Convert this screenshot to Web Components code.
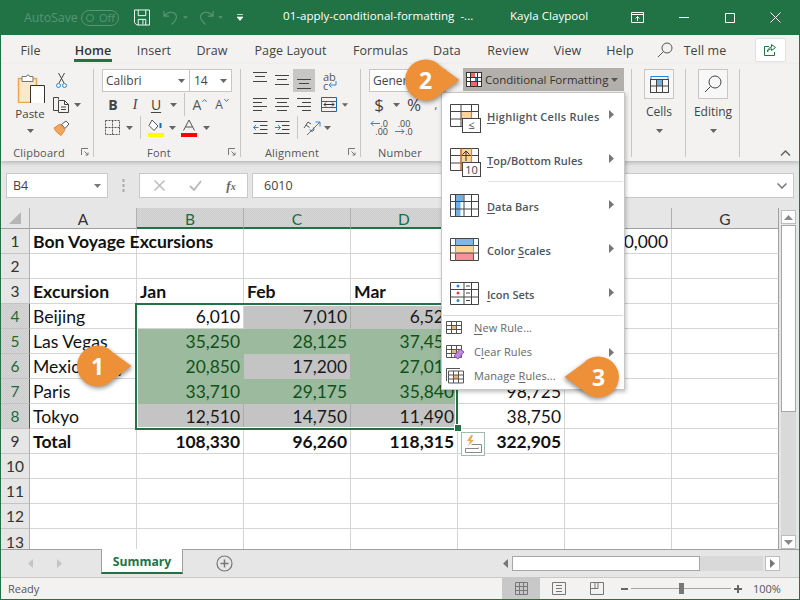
<!DOCTYPE html>
<html><head><meta charset="utf-8"><title>Excel</title>
<style>
html,body{margin:0;padding:0;background:#fff}
body{width:800px;height:600px;overflow:hidden}
</style></head><body>
<x-excel>
  <x-titlebar></x-titlebar>
  <x-tabbar></x-tabbar>
  <x-ribbon></x-ribbon>
  <x-formulabar></x-formulabar>
  <x-sheet></x-sheet>
  <x-sheettabs></x-sheettabs>
  <x-statusbar></x-statusbar>
  <x-cfmenu></x-cfmenu>
  <x-callout style="left:76px;top:345px">1</x-callout>
  <x-callout style="left:404px;top:59px">2</x-callout>
  <x-callout flip style="left:563px;top:356px">3</x-callout>
</x-excel>
<script>
const UI='"Open Sans","Noto Sans","Liberation Sans",sans-serif';
const CAL='Lato,"Open Sans",sans-serif';
function def(name,html){customElements.define(name,class extends HTMLElement{constructor(){super();this.attachShadow({mode:'open'}).innerHTML=html;}});}
const caret=(c='#666')=>`<svg width="7" height="4" viewBox="0 0 7 4" style="display:block"><path d="M0 0h7L3.5 4z" fill="${c}"/></svg>`;
const tri=(c='#777')=>`<svg width="5" height="9" viewBox="0 0 5 9" style="display:block"><path d="M0 0l5 4.5L0 9z" fill="${c}"/></svg>`;
const launcher=`<svg width="8" height="8" viewBox="0 0 8 8" style="display:block"><path d="M.5 7V.5H7M3.5 3.5L7 7M7 4.5V7H4.5" fill="none" stroke="#777"/></svg>`;
const hl=(rows,col='#444')=>`<svg width="16" height="23" viewBox="0 0 16 23" style="display:block">${rows.map(r=>`<path d="M${r[0]} ${r[2]}.5H${r[1]}" stroke="${col}"/>`).join('')}</svg>`;

def('x-excel',`<style>
:host{display:flex;flex-direction:column;position:relative;box-sizing:border-box;width:800px;height:600px;border:1px solid #217346;border-top:0;background:#e6e6e6;overflow:hidden;font-family:${UI}}
::slotted(x-callout){position:absolute;z-index:6}
::slotted(x-cfmenu){position:absolute;left:440px;top:92px;z-index:5}
</style><slot></slot>`);

def('x-titlebar',`<style>
:host{display:flex;align-items:center;height:35px;flex:none;background:#217346;color:#fff;font:11.6px ${UI};padding-left:23px;box-sizing:border-box;white-space:nowrap;margin-left:-1px;margin-right:-1px}
.dim{color:#5a9376;font-size:12.3px}
span{display:block;flex:none}
svg{display:block;flex:none}
.pill{width:38px;height:16px;border:1px solid #5a9376;border-radius:9px;box-sizing:border-box;display:flex;align-items:center;font-size:11px;color:#5a9376;margin-right:15px;padding-left:4px;gap:5px}
.pill b{display:block;width:8px;height:8px;border:1px solid #5a9376;border-radius:50%;box-sizing:border-box;flex:none}
</style>
<span class="dim" style="width:57px;margin-left:1px">AutoSave</span>
<div class="pill"><b></b><span>Off</span></div>
<svg width="16" height="17" viewBox="0 0 17 17" fill="none" stroke="#fff" style="margin-right:13px"><path d="M.5.5H16.5V16.5H3L.5 14zM4.5.5V6.5H12.5V.5M4.5 16.5V10.5H12.5V16.5M9.5 11V16"/></svg>
<svg width="15" height="17" viewBox="0 0 16 17" fill="none" stroke="#5a9376" stroke-width="1.2" style="margin-right:5px"><path d="M1 1.5V7H6.5M1.5 6.5C5 2 12 1.5 14 6c1.5 4-1.5 7-5 10"/></svg>
<svg width="5" height="3" viewBox="0 0 6 3" style="margin-right:11px"><path d="M0 0h6L3 3z" fill="#5a9376"/></svg>
<svg width="15" height="17" viewBox="0 0 16 17" fill="none" stroke="#5a9376" stroke-width="1.2" style="margin-right:4px"><path d="M15 1.5V7H9.5M14.5 6.5C11 2 4 1.5 2 6c-1.5 4 1.5 7 5 10"/></svg>
<svg width="5" height="3" viewBox="0 0 6 3" style="margin-right:14px"><path d="M0 0h6L3 3z" fill="#5a9376"/></svg>
<svg width="6" height="7" viewBox="0 0 6 7" style="margin-right:40px"><path d="M0 .5H6M0 3h6L3 6.5z" fill="#fff" stroke="#fff" stroke-width=".7"/></svg>
<span style="width:227px;margin-top:-4px">01-apply-conditional-formatting&nbsp; -...</span>
<span style="width:121px;margin-top:-4px">Kayla Claypool</span>
<svg width="13" height="11" viewBox="0 0 13 11" fill="none" stroke="#fff" style="margin-right:35px"><path d="M.5.5h12v10H.5zM.5 2.5h12M6.5 9V4.5M4.5 6.5l2-2 2 2"/></svg>
<svg width="10" height="1" style="margin-right:36px"><rect width="10" height="1" fill="#fff"/></svg>
<svg width="10" height="10" viewBox="0 0 10 10" fill="none" stroke="#fff" style="margin-right:35px"><path d="M.5.5h9v9h-9z"/></svg>
<svg width="11" height="11" viewBox="0 0 11 11" fill="none" stroke="#fff"><path d="M.5.5l10 10M10.500.5l-10 10"/></svg>`);

def('x-tabbar',`<style>
:host{display:flex;align-items:stretch;height:29px;flex:none;background:#f3f2f1;color:#444;font:12.5px ${UI};white-space:nowrap;box-sizing:border-box;letter-spacing:.1px}
div{flex:none;display:flex;justify-content:center;padding-top:7px;box-sizing:border-box;position:relative}
.on{color:#333;font-weight:600}
.on::after{content:"";position:absolute;left:50%;margin-left:-19px;bottom:2px;width:38px;height:3px;background:#217346}
.s{display:block;margin:7px 0 0 0;flex:none}
.share{width:31px;height:24px;border:1px solid #e1e1e1;border-radius:2px;background:#fff;box-sizing:border-box;margin:3px 0 0 30px;display:flex;align-items:center;justify-content:center;flex:none;padding:0}
</style>
<div style="width:59px">File</div><div class="on" style="width:66px">Home</div><div style="width:56px">Insert</div><div style="width:60px">Draw</div><div style="width:97px">Page Layout</div><div style="width:83px">Formulas</div><div style="width:50px">Data</div><div style="width:72px">Review</div><div style="width:47px">View</div><div style="width:58px">Help</div>
<svg class="s" width="16" height="16" viewBox="0 0 16 16" fill="none" stroke="#555" style="margin-left:8px;margin-right:12px"><circle cx="10" cy="6" r="5"/><path d="M6.5 9.5L1 15"/></svg>
<div style="width:40px">Tell me</div>
<div class="share"><svg width="14" height="14" viewBox="0 0 14 14" fill="none" stroke="#217346"><path d="M5 3.5H.5v9h10V9M7.5 1.5l4 3-4 3V5.8C5.5 5.8 4 7 3.5 9c0-3 2-4.800 4-4.800z"/></svg></div>`);

const boxIcon=(inner)=>`<div class="bigbox">${inner}</div>`;
def('x-ribbon',`<style>
:host{display:flex;height:97px;flex:none;background:#f3f2f1 ;color:#444;font:11px ${UI};position:relative;z-index:2;box-shadow:0 2px 4px rgba(0,0,0,.2);white-space:nowrap}
.g{flex:none;display:flex;flex-direction:column;box-sizing:border-box;background:linear-gradient(#c6c6c6,#c6c6c6) right 0 top 5px/1px 88px no-repeat}
.g.nosep{background:none}
.c{height:81px;box-sizing:border-box;padding-top:5px;flex:none}
.l{display:flex;align-items:center;height:16px;color:#555;font-size:11px;letter-spacing:.2px;padding-bottom:2px;box-sizing:border-box}
.l span{display:block;text-align:center}
.r{display:flex;align-items:center;height:23px}
.r2{margin-top:1px}
i{display:flex;align-items:center;justify-content:center;font-style:normal;flex:none;height:23px}
.sep{width:1px;height:23px;background:#c6c6c6;display:block}
.combo{height:23px;background:#fff;border:1px solid #c6c6c6;box-sizing:border-box;display:flex;align-items:center;font:12px ${UI};color:#444;padding-left:3px;flex:none;justify-content:space-between}
.combo svg{margin-right:4px}
.sel{background:#c6c6c6}
.bigbox{width:30px;height:30px;border:1px solid #c6c6c6;background:#f7f7f7;box-sizing:border-box;display:flex;align-items:center;justify-content:center}
.bigcol{display:flex;flex-direction:column;align-items:center;font-size:12px;color:#444}
.bigcol span{display:block;margin:5px 0 9px;line-height:16px}
b.t{font:700 14px ${UI};color:#444}
em.t{font:italic 14px "Liberation Serif",serif;color:#444}
.cf{display:flex;align-items:center;height:23px;width:161px;background:#b3afab;margin:-1px 0 0 7px;font:11.5px ${UI};color:#333;box-sizing:border-box;padding-left:3px}
.cf span{display:block;margin:0 3px 0 3px}
.chev{flex:none;display:flex;align-items:flex-end;padding:0 0 5px 40px;box-sizing:border-box;height:97px}
</style>
<div class="g" style="width:93px">
  <div class="c" style="display:flex;padding-left:15px">
    <div style="display:flex;flex-direction:column;align-items:center;width:28px;padding-top:3px;flex:none">
      <svg width="28" height="31" viewBox="1 0 28 31" style="display:block;margin-left:2px"><path d="M2.500 6.500h18v24h-18z" fill="#fbe9c9" stroke="#f0a64e" stroke-width="1.500"/><path d="M6 4.500h4.500a1.500 1.500 0 0 1 3 0H17v5H6z" fill="#fff" stroke="#777"/><path d="M14.500 13.500h14v18h-14z" fill="#fff" stroke="#333"/></svg>
      <span style="font-size:11.5px;line-height:16px;margin-top:3px;display:block">Paste</span>
      <span style="display:block;margin-top:7px">${caret()}</span>
    </div>
    <div style="margin-left:7px;flex:none">
      <div class="r"><i style="width:20px;"><svg width="11" height="16" viewBox="0 0 11 16" fill="none"><path d="M2.500 0L8 10M8.500 0L3 10" stroke="#444"/><circle cx="2.500" cy="12.500" r="2" stroke="#2b88d8"/><circle cx="8.500" cy="12.500" r="2" stroke="#2b88d8"/></svg></i></div>
      <div class="r r2"><i style="width:20px"><svg width="17" height="16" viewBox="0 0 17 16" fill="none" stroke="#444"><path d="M5.500 2.500V.5H.5V13.500H5"/><path d="M5.500 3.500h6l4 4v8h-10zM11.500 3.500v4h4M8 10h5M8 12.500h5"/></svg></i><i style="width:11px;margin-left:1px">${caret()}</i></div>
      <div class="r"><i style="width:20px"><svg width="17" height="16" viewBox="0 0 17 16"><path d="M1 8l6-4 5 6-4 5.500C6 14 2.500 12 1 8z" fill="#f2a65a" stroke="#e8873a"/><path d="M8.500 4.500L13 1l3 3-4 4.500z" fill="#fff" stroke="#555"/></svg></i></div>
    </div>
  </div>
  <div class="l"><span style="width:76px">Clipboard</span><span style="margin-left:4px">${launcher}</span></div>
</div>
<div class="g" style="width:147px">
  <div class="c" style="padding-left:8px">
    <div class="r"><div class="combo" style="width:88px">Calibri${caret()}</div><div class="combo" style="width:42px;border-left:0;padding-left:4px">14${caret()}</div></div>
    <div class="r r2"><i style="width:22px"><b class="t">B</b></i><i style="width:22px"><em class="t" style="font-family:${UI}">I</em></i><i style="width:20px"><span style="font-size:14px;text-decoration:underline;text-underline-offset:2px">U</span></i><i style="width:14px">${caret()}</i><i style="width:8px"><span class="sep"></span></i><i style="width:24px"><span style="font-size:14px;color:#555">A</span><svg width="5" height="3" viewBox="0 0 5 3" style="margin:-8px 0 0 1px"><path d="M.3 3L2.500.5 4.700 3" stroke="#2b88d8" fill="none"/></svg></i><i style="width:20px"><span style="font-size:12px;color:#555">A</span><svg width="5" height="3" viewBox="0 0 5 3" style="margin:-8px 0 0 1px"><path d="M.3 0l2.200 2.500L4.700 0" stroke="#2b88d8" fill="none"/></svg></i></div>
    <div class="r"><i style="width:20px"><svg width="15" height="15" viewBox="0 0 15 15" fill="none" stroke="#555" stroke-dasharray="2 1"><path d="M.5.5h14v14H.5zM7.500.5v14M.5 7.500h14"/></svg></i><i style="width:14px">${caret()}</i><i style="width:8px"><span class="sep"></span></i><i style="width:24px"><svg width="18" height="18" viewBox="0 0 18 18"><path d="M5 1l6 6-4 4.500-5-5z" fill="#fff" stroke="#555"/><path d="M13.500 4v5" stroke="#106ebe" stroke-width="2"/><rect x="1" y="14" width="16" height="4" fill="#ffff00"/></svg></i><i style="width:8px">${caret()}</i><i style="width:26px"><svg width="16" height="18" viewBox="0 0 16 18"><path d="M2.500 11.500L8 1l5.500 10.500M4.500 8h7" fill="none" stroke="#555"/><rect y="14" width="16" height="4" fill="#ff0000"/></svg></i><i style="width:8px">${caret()}</i></div>
  </div>
  <div class="l"><span style="width:130px">Font</span><span style="margin-left:4px">${launcher}</span></div>
</div>
<div class="g" style="width:120px">
  <div class="c" style="padding-left:8px">
    <div class="r"><i style="width:22px">${hl([[1,15,3],[3,13,7],[1,15,12]])}</i><i style="width:22px">${hl([[1,15,6],[3,13,10],[1,15,15]])}</i><i class="sel" style="width:22px">${hl([[1,15,10],[3,13,14],[1,15,19]])}</i><i style="width:30px;flex-direction:column;font-size:11px;line-height:9px;color:#555;align-items:flex-start;padding-left:8px;box-sizing:border-box"><span>ab</span><span style="display:flex;align-items:center">c<svg width="9" height="8" viewBox="0 0 9 8" fill="none" stroke="#2b88d8"><path d="M8 0v4H1M3.500 1.500L1 4l2.500 2.500"/></svg></span></i></div>
    <div class="r r2"><i style="width:22px">${hl([[1,15,5],[1,10,9],[1,15,13],[1,10,17]])}</i><i style="width:22px">${hl([[1,15,5],[3,13,9],[1,15,13],[3,13,17]])}</i><i style="width:22px">${hl([[1,15,5],[6,15,9],[1,15,13],[6,15,17]])}</i><i style="width:27px"><svg width="16" height="15" viewBox="0 0 16 15" fill="none"><path d="M.5.500h15v14H.5zM.5 4.500h15M.5 10.500h15" stroke="#0f6cbd"/><path d="M3 7.500h10M5 5.500l-2 2 2 2M11 5.500l2 2-2 2" stroke="#333"/></svg></i><i style="width:6px">${caret()}</i></div>
    <div class="r"><i style="width:22px"><svg width="15" height="15" viewBox="0 0 15 15" fill="none"><path d="M.5 1.500h14M7 5.500h7.500M7 9.500h7.500M.5 13.500h14" stroke="#444"/><path d="M5.500 7.500H.5M3 5L.5 7.500 3 10" stroke="#2b88d8"/></svg></i><i style="width:22px"><svg width="15" height="15" viewBox="0 0 15 15" fill="none"><path d="M.5 1.500h14M7 5.500h7.500M7 9.500h7.500M.5 13.500h14" stroke="#444"/><path d="M0 7.500h5.500M3 5l2.500 2.500L3 10" stroke="#2b88d8"/></svg></i><i style="width:8px"><span class="sep"></span></i><i style="width:22px"><svg width="18" height="16" viewBox="0 0 18 16" fill="none"><path d="M4 15L17 2M17 2h-4.500M17 2v4.500" stroke="#2b88d8"/><path d="M1 8l4-6 3 2M3 5l3.500 2.500M7 9.500a2 2 0 1 0 3-2" stroke="#555"/></svg></i><i style="width:8px">${caret()}</i></div>
  </div>
  <div class="l"><span style="width:102px">Alignment</span><span style="margin-left:5px">${launcher}</span></div>
</div>
<div class="g nosep" style="width:95px">
  <div class="c" style="padding-left:8px">
    <div class="r"><div class="combo" style="width:77px">General</div></div>
    <div class="r r2"><i style="width:20px;font-size:17px;color:#444">$</i><i style="width:14px">${caret()}</i><i style="width:22px;font-size:17px;color:#444">%</i><i style="width:22px;font:700 19px ${UI};color:#444">,</i></div>
    <div class="r"><i style="width:22px;flex-direction:column;font-size:9px;line-height:8px;align-items:flex-end;padding-right:3px;box-sizing:border-box"><span style="display:flex;align-items:center"><svg width="10" height="7" viewBox="0 0 10 7" fill="none" stroke="#2b88d8"><path d="M10 3.500H1M3.500 1L1 3.500 3.500 6"/></svg>.0</span><span>.00</span></i><i style="width:26px;flex-direction:column;font-size:9px;line-height:8px"><span>.00</span><span style="display:flex;align-items:center"><svg width="10" height="7" viewBox="0 0 10 7" fill="none" stroke="#2b88d8"><path d="M0 3.500h9M6.500 1L9 3.500 6.500 6"/></svg>.0</span></i></div>
  </div>
  <div class="l"><span style="width:78px">Number</span></div>
</div>
<div class="g" style="width:176px">
  <div class="c"><div class="cf"><svg width="16" height="15" viewBox="0 0 16 15" style="flex:none"><rect x=".5" y=".5" width="15" height="14" fill="#fff" stroke="#333"/><rect x="4" y="1" width="5" height="4" fill="#ee6a6a"/><rect x="9" y="5" width="3" height="4" fill="#1e88e5"/><rect x="4" y="9" width="8" height="5" fill="#ee6a6a"/><path d="M4.500 1v13M11.500 1v13M1 5.500h14M1 9.500h14" stroke="#333"/></svg><span>Conditional Formatting</span>${caret('#555')}</div></div>
</div>
<div class="g" style="width:54px">
  <div class="c bigcol" style="padding-top:5px">${boxIcon(`<svg width="19" height="18" viewBox="0 0 19 18" fill="none"><path d="M1 .5h17M1 0v3M18 0v3" stroke="#2b88d8" transform="translate(0 1)"/><rect x=".5" y="4.500" width="18" height="13" stroke="#444"/><rect x="6" y="5" width="7" height="6" fill="#6eb0e8"/><path d="M6.500 5v12M12.500 5v12M1 11h17" stroke="#444"/></svg>`)}<span>Cells</span>${caret()}</div>
</div>
<div class="g" style="width:54px">
  <div class="c bigcol" style="padding-top:5px">${boxIcon(`<svg width="18" height="18" viewBox="0 0 18 18" fill="none" stroke="#444"><circle cx="11" cy="7" r="6"/><path d="M6.500 11.500L1 17"/></svg>`)}<span>Editing</span>${caret()}</div>
</div>
<div class="chev"><svg width="11" height="6" viewBox="0 0 11 6" fill="none" stroke="#666" stroke-width="1.500" style="display:block"><path d="M1 5.500l4.500-4.500 4.500 4.500"/></svg></div>`);

def('x-formulabar',`<style>
:host{display:flex;align-items:flex-start;height:47px;flex:none;background:#e6e6e6;padding:12px 5px 0 5px;box-sizing:border-box;font:12.500px ${UI};color:#444}
.b{height:25px;background:#fff;border:1px solid #c9c9c9;box-sizing:border-box;display:flex;align-items:center;flex:none}
i{display:flex;justify-content:center;align-items:center;width:36px;font-style:normal;flex:none}
</style>
<div class="b" style="width:102px;padding-left:6px;justify-content:space-between;padding-right:6px">B4${caret('#777')}</div>
<svg width="3" height="13" viewBox="0 0 3 13" style="margin:6px 14px 0 14px;display:block;flex:none"><path d="M1.500 0v3M1.500 5v3M1.500 10v3" stroke="#aaa" stroke-width="2"/></svg>
<div class="b" style="width:109px;padding-left:1px;background:#fff">
<i><svg width="11" height="11" viewBox="0 0 11 11" fill="none" stroke="#bcbcbc" stroke-width="1.500"><path d="M.5.500l10 10M10.500.500l-10 10"/></svg></i>
<i><svg width="13" height="11" viewBox="0 0 13 11" fill="none" stroke="#bcbcbc" stroke-width="2"><path d="M1 6l4 4 7-9"/></svg></i>
<i><span style="font:italic 700 13px 'Liberation Serif',serif;color:#666">f<span style="font-size:10px">x</span></span></i></div>
<div class="b" style="margin-left:4px;flex:1;padding:0 6px 0 11px;justify-content:space-between">6010<svg width="10" height="6" viewBox="0 0 10 6" fill="none" stroke="#777" stroke-width="1.500"><path d="M.5.500L5 5 9.500.500"/></svg></div>`);

customElements.define('x-sheet',class extends HTMLElement{constructor(){super();
 const R=this.attachShadow({mode:'open'});
 const G='g',S='s';
 const data={
  1:[['Bon Voyage Excursions','bt'],[],[],[],[],['0,000','n']],
  3:[['Excursion','b'],['Jan','b'],['Feb','b'],['Mar','b']],
  4:[['Beijing'],['6,010','n'],['7,010','n',S],['6,520','n',S]],
  5:[['Las Vegas'],['35,250','n',G],['28,125','n',G],['37,450','n',G]],
  6:[['Mexico City'],['20,850','n',G],['17,200','n',S],['27,010','n',G]],
  7:[['Paris'],['33,710','n',G],['29,175','n',G],['35,840','n',G],['98,725','n']],
  8:[['Tokyo'],['12,510','n',S],['14,750','n',S],['11,490','n',S],['38,750','n']],
  9:[['Total','b'],['108,330','nb'],['96,260','nb'],['118,315','nb'],['322,905','nb']]
 };
 let h=`<div class="corner"><svg width="14" height="14" viewBox="0 0 14 14"><path d="M13 1v12H1z" fill="#b5b5b5"/></svg></div>`;
 'ABCDEFG'.split('').forEach((c,i)=>{h+=`<div class="ch${i>=1&&i<=3?' on':''}">${c}</div>`});
 for(let r=1;r<=13;r++){
  h+=`<div class="rh${r>=4&&r<=8?' on':''}${r===13?' last':''}">${r}</div>`;
  const row=data[r]||[];
  for(let c=0;c<7;c++){
   const d=row[c]||[];const cl=['c'];
   if(d[1])cl.push(...d[1].split('').map(x=>'k'+x));
   if(d[2])cl.push('f'+d[2]);
   if(r===13)cl.push('lastc');
   h+=`<div class="${cl.join(' ')}">${d[0]||''}</div>`;
  }
 }
 R.innerHTML=`<style>
:host{display:flex;height:341px;flex:none;background:#e6e6e6;font:17.6px ${CAL};color:#111;overflow:hidden}
.grid{position:relative;display:grid;grid-template-columns:29px repeat(7,107px);grid-template-rows:21px repeat(12,25px) 20px;width:778px;height:341px;overflow:hidden;flex:none;background:#fff}
.corner{background:#e6e6e6;border-bottom:1px solid #a0a0a0;border-right:1px solid #b0b0b0;box-sizing:border-box;display:flex;align-items:center;justify-content:center}
.ch{background:#e6e6e6;border-right:1px solid #b0b0b0;border-bottom:1px solid #a0a0a0;box-sizing:border-box;display:flex;align-items:center;justify-content:center;font-size:15.5px;color:#333;padding-top:2px}
.ch.on{background:repeating-conic-gradient(#d6d6d6 0 25%,#cccccc 0 50%) 0 0/2px 2px;border-bottom:2px solid #217346;color:#1c6a3f}
.ch:nth-child(8){border-right:1px solid #a0a0a0}
.rh{background:#e6e6e6;border-right:1px solid #b0b0b0;border-bottom:1px solid #c4c4c4;box-sizing:border-box;display:flex;align-items:center;justify-content:center;font-size:15.5px;color:#333}
.rh.on{background:repeating-conic-gradient(#d6d6d6 0 25%,#cccccc 0 50%) 0 0/2px 2px;border-right:1px solid #217346;color:#1c6a3f}
.rh.last{border-bottom:0;align-items:flex-start;padding-top:6px;line-height:14px}
.c{border-right:1px solid #d4d4d4;border-bottom:1px solid #d4d4d4;box-sizing:border-box;display:flex;align-items:center;padding:0 3px;white-space:nowrap;overflow:visible;min-width:0}
.lastc{border-bottom:0}
.c:nth-child(8n){border-right-color:#a0a0a0}
.kb{font-weight:700}
.kn{justify-content:flex-end;font-size:17.4px}
.fg{background:#9cba9e;border-color:#9cba9e;color:#0d5218}
.fs{background:#c4c4c4;border-color:#c4c4c4;border-right-color:#acacac;color:#1a1a1a}
.sel{position:absolute;left:134px;top:95px;width:323px;height:127px;box-sizing:border-box;border:2px solid #217346;box-shadow:inset 1px 1px 0 #fff,inset -1px -1px 0 #fff}
.hd{position:absolute;left:454px;top:217px;width:6px;height:6px;box-sizing:border-box;background:#217346;outline:1px solid #fff}
.qa{position:absolute;left:460px;top:224px;width:24px;height:24px;box-sizing:border-box;border:1px solid #9dbfa9;background:#fff;display:flex;align-items:center;justify-content:center}
.sb{flex:none;width:20px;box-sizing:border-box;padding:2px 3px 0 2px;display:flex;flex-direction:column}
.btn{height:14px;background:#fff;border:1px solid #bdbdbd;box-sizing:border-box;display:flex;align-items:center;justify-content:center;flex:none}
.th{height:187px;background:#fff;border:1px solid #a6a6a6;box-sizing:border-box;flex:none;margin-top:1px}
.tr{flex:1;background:#d9d9d9}
</style>
<div class="grid">${h}<div class="sel"></div><div class="hd"></div>
<div class="qa"><svg width="19" height="19" viewBox="0 0 19 19" fill="none"><path d="M7 0L3 6h3L4 11l6-6H7l2-5z" fill="#f2a65a"/><path d="M7.500 9.500h10v8H1.500v-4h13v-1" stroke="#888"/></svg></div></div>
<div class="sb"><div class="btn"><svg width="9" height="5" viewBox="0 0 9 5"><path d="M0 5l4.500-5L9 5z" fill="#8a8a8a"/></svg></div><div class="th"></div><div class="tr"></div><div class="btn"><svg width="9" height="5" viewBox="0 0 9 5"><path d="M0 0l4.500 5L9 0z" fill="#8a8a8a"/></svg></div></div>`;
}});

def('x-sheettabs',`<style>
:host{display:flex;height:28px;flex:none;background:#e6e6e6;border-top:1px solid #a0a0a0;box-sizing:border-box;align-items:flex-start}
.tab{width:82px;height:25px;background:#fff;border-left:1px solid #a0a0a0;border-right:1px solid #a0a0a0;margin-top:-1px;border-bottom:2px solid #217346;box-sizing:border-box;display:flex;align-items:center;justify-content:center;font:700 12.2px ${UI};color:#217346;flex:none;padding-top:1px}
svg{display:block;flex:none}
.hs{display:flex;align-items:stretch;height:15px;margin:6px 0 0 0;flex:none}
.th{width:188px;background:#fff;border:1px solid #a6a6a6;box-sizing:border-box}
.tr{width:63px;background:#d9d9d9}
.btn{width:15px;background:#fff;border:1px solid #bdbdbd;box-sizing:border-box;display:flex;align-items:center;justify-content:center;margin-left:2px}
</style>
<svg width="5" height="9" viewBox="0 0 5 9" style="margin:9px 24px 0 27px"><path d="M5 0L0 4.500 5 9z" fill="#c4c4c4"/></svg>
<svg width="5" height="9" viewBox="0 0 5 9" style="margin:9px 39px 0 0"><path d="M0 0l5 4.500L0 9z" fill="#c4c4c4"/></svg>
<div class="tab">Summary</div>
<svg width="17" height="17" viewBox="0 0 17 17" fill="none" stroke="#777" style="margin:5px 0 0 33px"><circle cx="8.500" cy="8.500" r="7.500" stroke-width="1.200"/><path d="M8.500 4.500v8M4.500 8.500h8" stroke-width="1.500"/></svg>
<svg width="5" height="9" viewBox="0 0 5 9" style="margin:9px 4px 0 270px"><path d="M5 0L0 4.500 5 9z" fill="#777"/></svg>
<div class="hs"><div class="th"></div><div class="tr"></div><div class="btn">${tri('#777')}</div></div>`);

def('x-statusbar',`<style>
:host{display:flex;height:22px;flex:none;background:#f3f2f1;border-top:1px solid #c8c8c8;box-sizing:border-box;align-items:center;font:11px ${UI};color:#555}
svg{display:block;flex:none}
.v{width:38px;height:21px;display:flex;align-items:center;justify-content:center;flex:none}
.on{background:#c8c8c8}
.sl{width:100px;height:1px;background:#a6a6a6;position:relative;flex:none;margin:0 3px 0 3px}
.sl b{position:absolute;left:48px;top:-5px;width:5px;height:11px;background:#777}
</style>
<span style="margin-left:7px;width:494px;display:block;flex:none">Ready</span>
<div class="v on"><svg width="13" height="13" viewBox="0 0 13 13" fill="none" stroke="#777"><path d="M.5.500h12v12H.5zM4.500.500v12M8.500.500v12M.5 4.500h12M.5 8.500h12"/></svg></div>
<div class="v"><svg width="14" height="13" viewBox="0 0 14 13" fill="none" stroke="#777"><path d="M.5.500h13v12H.5zM4 3.500h6M4 6.500h6M4 9.500h6"/></svg></div>
<div class="v"><svg width="14" height="13" viewBox="0 0 14 13" fill="none" stroke="#777"><path d="M.5.500h13v12H.5zM.5 6.500H8V.500M5 .5V6"/></svg></div>
<svg width="7" height="2" style="margin-left:5px"><rect width="7" height="2" fill="#666"/></svg>
<div class="sl"><b></b></div>
<svg width="8" height="8" viewBox="0 0 8 8"><path d="M0 4h8M4 0v8" stroke="#666" stroke-width="2"/></svg>
<span style="margin-left:11px;display:block;flex:none">100%</span>`);

const tb=(extra)=>`<svg width="32" height="30" viewBox="0 -2 32 30" fill="none" style="display:block;overflow:visible">${extra}</svg>`;
const sm=(extra)=>`<svg width="20" height="16" viewBox="0 0 20 16" fill="none" style="display:block">${extra}</svg>`;
const GL=`<path d="M.5.500h28v22H.5zM11 .5v22M21.500 .5v22M.5 7.500h28M.5 15h28" stroke="#444"/>`;
const SG=`<path d="M.5 1.500h15v12H.5zM5.500 1.500v12M10.500 1.500v12M.5 5.500h15M.5 9.500h15" stroke="#555"/>`;
def('x-cfmenu',`<style>
:host{display:block;width:184px;height:298px;background:#fff;border:1px solid #c6c6c6;box-sizing:border-box;box-shadow:1px 2px 4px rgba(0,0,0,.25);font:11px ${UI};color:#555;padding-top:2px;white-space:nowrap}
.it{display:flex;align-items:center;height:44px;box-sizing:border-box;padding-left:8px}
.it b{display:block;font-weight:600;margin:-2px 0 0 7px;width:122px;color:#4d5660}
.it>svg{margin-top:-6px}
.ic{width:30px;flex:none}
.n2{height:42px;padding-top:2px}
.sm{display:flex;align-items:center;height:24px;padding-left:4px;box-sizing:border-box}
.sm span{display:block;margin:-2px 0 0 8px;width:135px;color:#666;letter-spacing:.1px}
u{text-underline-offset:1.500px}
hr{border:0;border-top:1px solid #e2e2e2;margin:0 1px 0 46px;height:0}
hr.f{margin:0 1px;border-top-color:#d8d8d8}
svg text{font-family:${UI}}
</style>
<div class="it"><div class="ic">${tb(`<rect x="11" y="8" width="10" height="8" fill="#fcd596"/>${GL}<path d="M11 15.500h10.500M21.500 8v8" stroke="#ed7d31" stroke-width="1.200"/><rect x="12.500" y="14.500" width="18" height="14" fill="#fff" stroke="#444"/><text x="21.500" y="25" font-size="11" text-anchor="middle" fill="#444">≤</text>`)}</div><b style="letter-spacing:.25px"><u>H</u>ighlight Cells Rules</b>${tri()}</div>
<div class="it n2"><div class="ic">${tb(`<rect x="11" y="1" width="10" height="21" fill="#fcd596"/>${GL}<path d="M11 .5v22M21.500 .5v22" stroke="#ed7d31" stroke-width="1.200"/><path d="M16 13V3M12.500 6.500L16 3l3.500 3.500" stroke="#333"/><rect x="12.500" y="14.500" width="18" height="14" fill="#fff" stroke="#444"/><text x="21.500" y="26" font-size="11" text-anchor="middle" fill="#444">10</text>`)}</div><b><u>T</u>op/Bottom Rules</b>${tri()}</div>
<hr style="margin-bottom:3px">
<div class="it"><div class="ic">${tb(`<rect x="5.500" y="1" width="8" height="7" fill="#6eb0e8"/><rect x="5.500" y="8" width="5" height="14" fill="#6eb0e8"/><path d="M.5.500h28v22H.5zM5.500.500v22M14 .5v22M21.500.500v22M.5 7.500h28M.5 15h28" stroke="#444"/>`)}</div><b><u>D</u>ata Bars</b>${tri()}</div>
<div class="it"><div class="ic">${tb(`<rect x="5.500" y="1" width="18" height="7" fill="#7eb6e8"/><rect x="5.500" y="8" width="18" height="7" fill="#fcd596"/><rect x="5.500" y="15" width="18" height="7" fill="#f7919a"/><path d="M.5.500h28v22H.5zM.5 7.500h28M.5 15h28" stroke="#444"/><path d="M5.500.500v7.500M23.500.500v7.500" stroke="#1e6fc0"/><path d="M5.500 8v7M23.500 8v7" stroke="#ed9c31"/><path d="M5.500 15v7.500M23.500 15v7.500" stroke="#d62b2b"/>`)}</div><b>Color <u>S</u>cales</b>${tri()}</div>
<div class="it n2"><div class="ic">${tb(`<path d="M.5.500h28v22H.5zM14 .5v22M21.500 .5v22M.5 7.500h28M.5 15h28" stroke="#444"/><circle cx="8" cy="4" r="1.500" fill="#2b88d8"/><circle cx="8" cy="11" r="1.500" fill="#e04343"/><circle cx="8" cy="18.500" r="1.500" fill="#2b88d8"/><path d="M16 4h4M16 11h4M16 18.500h4" stroke="#444"/>`)}</div><b><u>I</u>con Sets</b>${tri()}</div>
<hr class="f">
<div class="sm"><div style="flex:none;width:20px">${sm(`<rect x="5.500" y="5.500" width="5" height="4" fill="#f8b26a"/>${SG}`)}</div><span><u>N</u>ew Rule...</span></div>
<div class="sm"><div style="flex:none;width:20px">${sm(`<rect x="5.500" y="5.500" width="5" height="4" fill="#f8b26a"/>${SG}<path d="M8 12l6-7 4 3-6 7z" fill="#c08adf" stroke="#8a4dae"/>`)}</div><span>C<u>l</u>ear Rules</span>${tri()}</div>
<div class="sm"><div style="flex:none;width:20px">${sm(`<path d="M.5 13V.5H14" stroke="#555"/><g transform="translate(2 1.500)"><rect x="5.500" y="5.500" width="5" height="4" fill="#f8b26a"/>${SG}</g>`)}</div><span>Manage <u>R</u>ules...</span></div>`);

customElements.define('x-callout',class extends HTMLElement{constructor(){super();
 this.attachShadow({mode:'open'}).innerHTML=`<style>
:host{display:grid;width:55px;height:42px;color:#fff;font:700 23px ${UI}}
svg{grid-area:1/1;display:block;overflow:visible;filter:drop-shadow(1.500px 2px 2px rgba(0,0,0,.4))}
:host([flip]) svg{transform:scaleX(-1)}
span{grid-area:1/1;width:41px;display:flex;align-items:center;justify-content:center;justify-self:start;position:relative}
:host([flip]) span{justify-self:end}
</style><svg width="55" height="42" viewBox="0 0 55 42"><path d="M20.500 .5A20.500 20.500 0 0 1 36 7.500L54.500 21 36 34.500A20.500 20.500 0 1 1 20.500 .5z" fill="#ed9038"/></svg><span><slot></slot></span>`;
}});
</script>
</body></html>
